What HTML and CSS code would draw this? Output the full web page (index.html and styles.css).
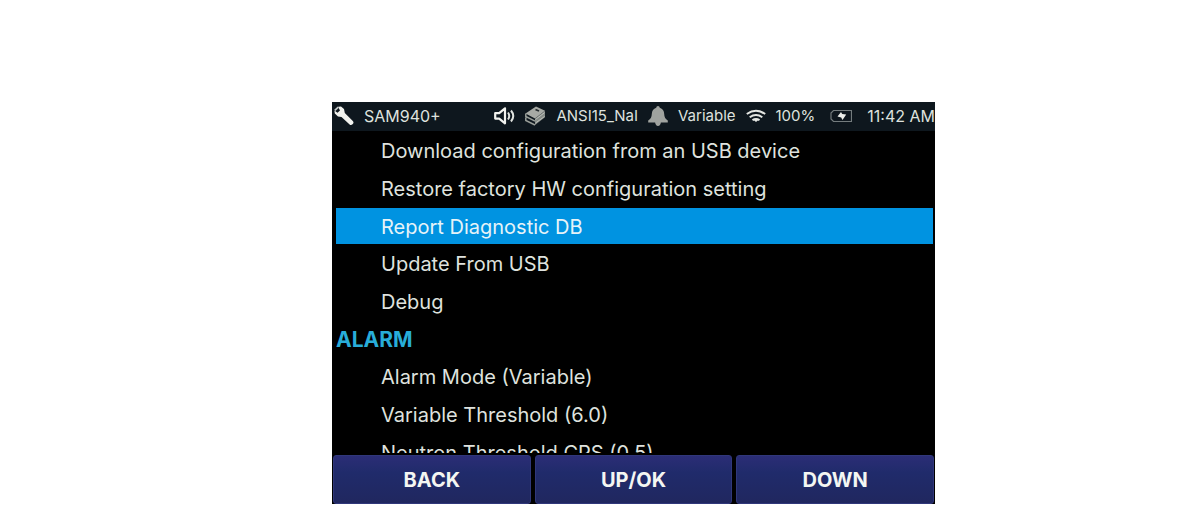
FILE: index.html
```html
<!DOCTYPE html>
<html lang="en">
<head>
<meta charset="utf-8">
<title>SAM940+ Settings</title>
<link rel="stylesheet" href="styles.css">
</head>
<body>
<main class="device">
  <header class="status">
    <svg class="icon" width="20" height="20" viewBox="0 0 20 20" aria-hidden="true"><path d="M4 .8 7 .5l3 2.500.8 4 8 8q1.400 1.400 0 3-1.800 1.600-3.200.4L7.500 11 4 10.500.8 7.500.4 4.600 3.500 6.800l2.500-2.300z" fill="#f1f2ee"/><path d="m.8 4.300 3.500-3.200" stroke="#c5caca" stroke-width="1.800"/></svg>
    <span class="name">SAM940+</span>
    <svg class="icon" width="21" height="20" viewBox="0 0 21 20" aria-hidden="true"><path d="M1.200 7.200h4L11 2.300v15l-5.800-4.700h-4z" fill="none" stroke="#f1f2ee" stroke-width="2.200" stroke-linejoin="round"/><path d="M14 6.500q2.500 3.500 0 7M17 4.500q4.500 5.500 0 11" fill="none" stroke="#e1e4e0" stroke-width="2"/></svg>
    <svg class="icon" width="21" height="20" viewBox="0 0 21 20" aria-hidden="true"><path d="M.5 7.500 11 .5 20 4.800 10 12.500z" fill="#a7aaa5"/><path d="m10 12.500 10-7.700v6.500L10 19z" fill="#858b87"/><path d="M.8 7.500v3l9.200 4.700M.8 11.500v3l9.200 4.500" fill="none" stroke="#989d98" stroke-width="1.500"/><path d="m10.500 13.500 9-6.800M10.500 17l9-6.500" stroke="#bbbeb9" stroke-width="1"/><path d="m10.500 3.500 3.500 1.500" stroke="#242b2f" stroke-width="1.800"/></svg>
    <span class="reading">ANSI15_NaI</span>
    <svg class="icon" width="20" height="20" viewBox="0 0 20 20" aria-hidden="true"><path d="M10 0q1.600 0 1.800 1.700Q16 3 16.200 8q.1 4.500 3.600 6.500v2H.2v-2Q3.700 12.500 3.800 8q.2-5 4.400-6.300Q8.400 0 10 0zM7 16h6q-.6 4-3 4t-3-4z" fill="#a0a39f"/></svg>
    <span class="reading">Variable</span>
    <svg class="icon" width="20" height="20" viewBox="0 0 20 20" aria-hidden="true"><path d="M.8 8q9.200-6.500 18.400 0M3.700 11.200q6.300-4.500 12.600 0M6.500 14.200q3.500-2.300 7 0" fill="none" stroke="#e5e7e3" stroke-width="2"/><path d="m7.700 14 2.300 2 2.300-2z" fill="#e5e7e3"/></svg>
    <span class="reading">100%</span>
    <svg class="icon battery" width="22" height="20" viewBox="0 0 22 20" aria-hidden="true"><path d="M3.500 4.500h18v11h-18l-2.500-2.500V7z" fill="none" stroke="#737b7d" stroke-width="1.200"/><path d="m11 6 1.200 2 4 .5-3.700 5.500-1.300-2.500-3.700-1z" fill="#eceeea"/></svg>
    <time>11:42 AM</time>
  </header>
  <section class="viewport">
    <div class="menu">
      <button class="item">Download configuration from an USB device</button>
      <button class="item">Restore factory HW configuration setting</button>
      <button class="item selected">Report Diagnostic DB</button>
      <button class="item">Update From USB</button>
      <button class="item">Debug</button>
      <h2 class="heading">ALARM</h2>
      <button class="item">Alarm Mode (Variable)</button>
      <button class="item">Variable Threshold (6.0)</button>
      <button class="item">Neutron Threshold CPS (0.5)</button>
    </div>
  </section>
  <nav class="keys">
    <button class="key">BACK</button>
    <button class="key">UP/OK</button>
    <button class="key">DOWN</button>
  </nav>
</main>
</body>
</html>
```
FILE: styles.css
```css
* { box-sizing: border-box; }

body {
  margin: 0;
  padding: 102px 258px 23px 332px;
  background: #fff;
  font-family: Inter, "Liberation Sans", sans-serif;
}

button {
  margin: 0;
  border: 0;
  font-family: inherit;
}

.device {
  display: flex;
  flex-direction: column;
  background: #000;
  color: #dfe2de;
}

.status {
  display: flex;
  align-items: center;
  gap: 10px;
  height: 29px;
  padding: 0 0 1px 2px;
  background: #0e171e;
  font-size: 16px;
  line-height: 20px;
  white-space: nowrap;
}

.icon { flex: none; }
.name { margin-right: auto; }
.reading { font-size: 15px; }
.battery { margin: 0 5px; }

.viewport {
  height: 322px;
  padding: 2px 2px 0 4px;
  overflow: hidden;
}

.menu {
  display: grid;
  grid-template-rows: repeat(9, 1fr);
  gap: 2px;
  height: 337px;
}

.item {
  padding: 1px 0 0 45px;
  background: transparent;
  color: #dfe2de;
  font-size: 20px;
  line-height: 32px;
  text-align: left;
  white-space: nowrap;
}

.selected {
  background: #0093e1;
  color: #e6f3f8;
}

.heading {
  margin: 0;
  padding-top: 2px;
  color: #28add9;
  font-size: 21px;
  font-weight: 700;
  line-height: 34px;
}

.keys {
  display: grid;
  grid-template-columns: repeat(3, 1fr);
  gap: 4px;
  padding: 2px 1px 0;
}

.key {
  height: 49px;
  border: 1px solid #30377a;
  border-radius: 3px;
  background: linear-gradient(#2b2d76, #202b6b 35%, #20275f);
  color: #f4f6f2;
  font-size: 20px;
  font-weight: 700;
}
```
